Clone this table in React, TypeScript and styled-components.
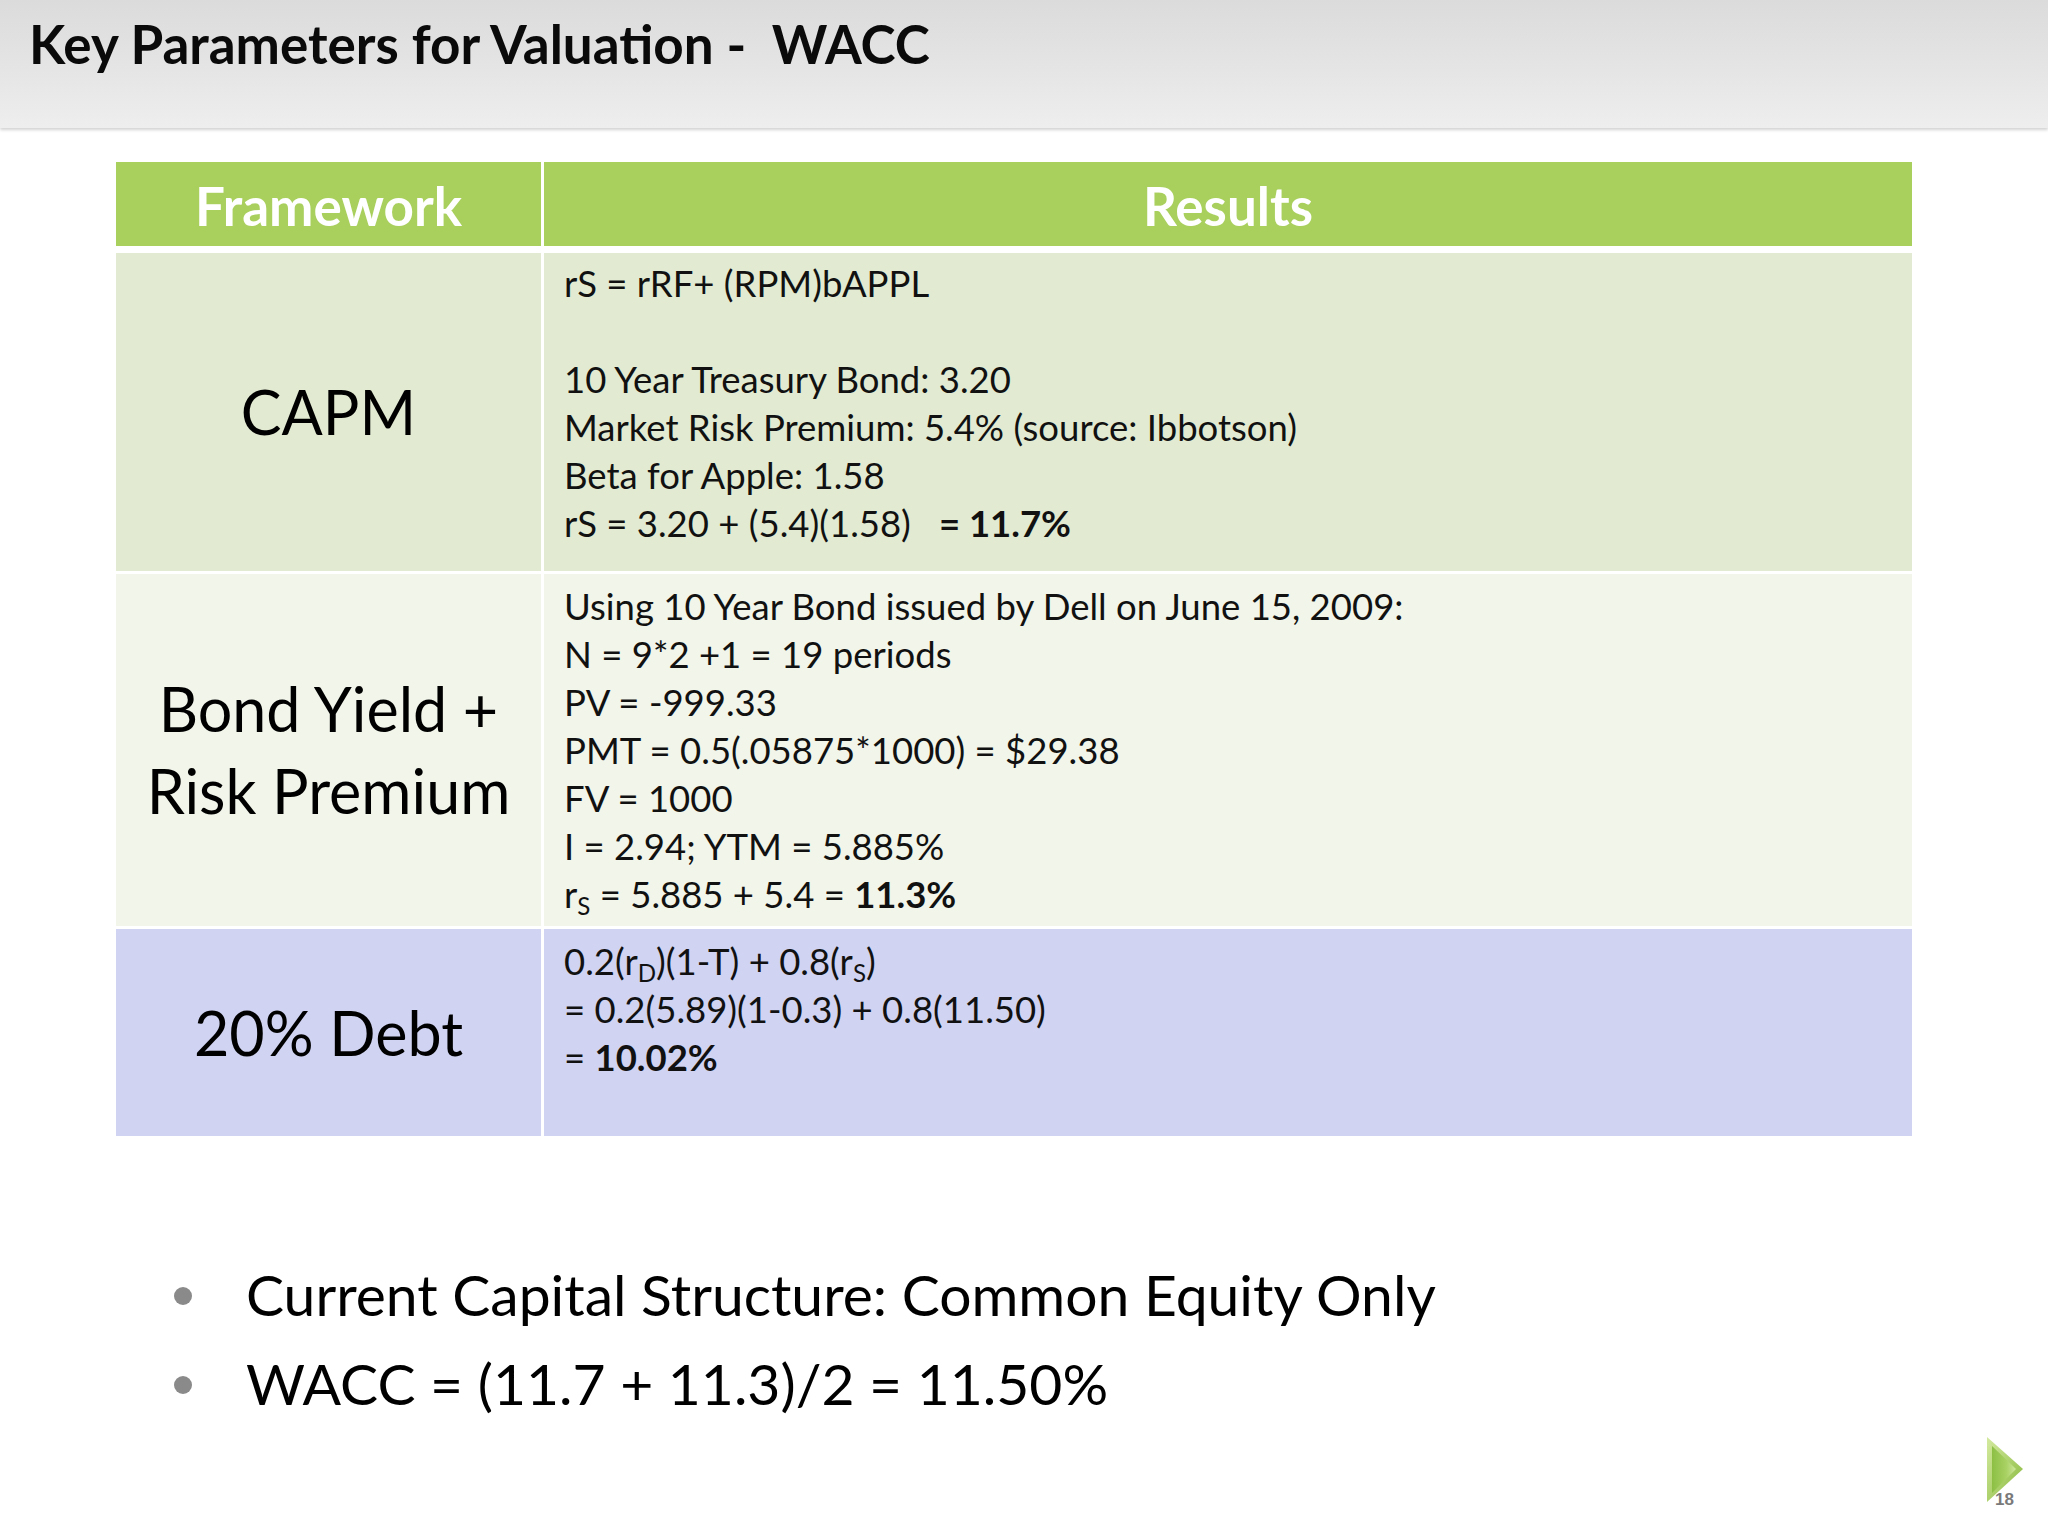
import React from 'react';
import styled, { createGlobalStyle } from 'styled-components';

const GlobalStyle = createGlobalStyle`
  html, body {
    margin: 0;
    padding: 0;
    background: #ffffff;
  }
  body {
    font-family: Lato, 'Open Sans', sans-serif;
    color: #000000;
  }
`;

const Slide = styled.div`
  position: relative;
  width: 2048px;
  height: 1536px;
  overflow: hidden;
  background: #ffffff;
`;

const TitleBar = styled.header`
  height: 128px;
  box-sizing: border-box;
  padding: 12px 0 0 29px;
  background: linear-gradient(180deg, #dbdbdb 0%, #e5e5e5 55%, #eeeeee 100%);
  box-shadow: 0 2px 3px rgba(0, 0, 0, 0.18);
`;

const Title = styled.h1`
  margin: 0;
  font-size: 53px;
  font-weight: 700;
  line-height: 1.2;
  color: #0a0a0a;
  white-space: pre;
`;

const Table = styled.div`
  margin: 34px 0 0 116px;
  width: 1796px;
  display: flex;
  flex-direction: column;
  gap: 3px;
`;

const Row = styled.div<{ $h: number; $bg: string; $after?: number }>`
  display: grid;
  grid-template-columns: 425px 1fr;
  column-gap: 3px;
  height: ${(p) => p.$h}px;
  margin-bottom: ${(p) => p.$after ?? 0}px;

  & > div {
    background: ${(p) => p.$bg};
  }
`;

const HeaderCell = styled.div`
  display: flex;
  align-items: center;
  justify-content: center;
  color: #ffffff;
  font-size: 53px;
  font-weight: 700;
  padding-top: 3px;
`;

const NameCell = styled.div`
  display: flex;
  align-items: center;
  justify-content: center;
  text-align: center;
  font-size: 61px;
  line-height: 82px;
  color: #000000;
`;

const ResultCell = styled.div<{ $pad: number }>`
  box-sizing: border-box;
  padding: ${(p) => p.$pad}px 20px 0 20px;
  font-size: 36.5px;
  line-height: 48px;
  color: #111111;
`;

const Line = styled.div`
  min-height: 48px;
  white-space: pre;
`;

const Strong = styled.b`
  font-weight: 700;
`;

const Sub = styled.span`
  font-size: 0.66em;
  line-height: 0;
  vertical-align: -0.28em;
`;

const Bullets = styled.ul`
  list-style: none;
  margin: 114px 0 0 0;
  padding: 0 0 0 174px;
`;

const BulletItem = styled.li`
  display: flex;
  align-items: flex-start;
  gap: 54px;
  font-size: 57px;
  line-height: 89px;
  color: #000000;
`;

const Dot = styled.span`
  flex: none;
  width: 18px;
  height: 18px;
  margin-top: 37px;
  border-radius: 50%;
  background: #8a8a8a;
`;

const PageBadge = styled.div`
  position: absolute;
  left: 1985px;
  top: 1435px;
  width: 44px;
  height: 80px;
`;

const PageNumber = styled.span`
  position: absolute;
  left: 10px;
  top: 55px;
  font-family: 'Liberation Sans', Arial, sans-serif;
  font-size: 17px;
  font-weight: 700;
  color: #7a7a7a;
`;

const NextArrow = () => (
  <svg width="40" height="70" viewBox="0 0 40 70">
    <defs>
      <linearGradient id="arrowOuter" x1="0" y1="0" x2="1" y2="1">
        <stop offset="0" stopColor="#d4eaa0" />
        <stop offset="1" stopColor="#86b83a" />
      </linearGradient>
      <linearGradient id="arrowInner" x1="0" y1="0" x2="1" y2="0">
        <stop offset="0" stopColor="#8cbf44" />
        <stop offset="0.6" stopColor="#a9d264" />
        <stop offset="1" stopColor="#cfe79c" />
      </linearGradient>
    </defs>
    <polygon points="2,2 38,34 2,67" fill="url(#arrowOuter)" />
    <polygon points="7,11 31,34 7,58" fill="url(#arrowInner)" />
  </svg>
);

export default function App() {
  return (
    <Slide>
      <GlobalStyle />
      <TitleBar>
        <Title>{'Key Parameters for Valuation -  WACC'}</Title>
      </TitleBar>

      <Table>
        <Row $h={84} $bg="#a9cf5d" $after={4}>
          <HeaderCell>Framework</HeaderCell>
          <HeaderCell>Results</HeaderCell>
        </Row>

        <Row $h={318} $bg="#e2ebd1">
          <NameCell>CAPM</NameCell>
          <ResultCell $pad={6}>
            <Line>rS = rRF+ (RPM)bAPPL</Line>
            <Line />
            <Line>10 Year Treasury Bond: 3.20</Line>
            <Line>Market Risk Premium: 5.4% (source: Ibbotson)</Line>
            <Line>Beta for Apple: 1.58</Line>
            <Line>
              {'rS = 3.20 + (5.4)(1.58)   '}
              <Strong>= 11.7%</Strong>
            </Line>
          </ResultCell>
        </Row>

        <Row $h={352} $bg="#f1f5ea">
          <NameCell>
            Bond Yield +
            <br />
            Risk Premium
          </NameCell>
          <ResultCell $pad={8}>
            <Line>Using 10 Year Bond issued by Dell on June 15, 2009:</Line>
            <Line>N = 9*2 +1 = 19 periods</Line>
            <Line>PV = -999.33</Line>
            <Line>PMT = 0.5(.05875*1000) = $29.38</Line>
            <Line>FV = 1000</Line>
            <Line>I = 2.94; YTM = 5.885%</Line>
            <Line>
              r<Sub>S</Sub>
              {' = 5.885 + 5.4 = '}
              <Strong>11.3%</Strong>
            </Line>
          </ResultCell>
        </Row>

        <Row $h={207} $bg="#d0d3f2">
          <NameCell>20% Debt</NameCell>
          <ResultCell $pad={8}>
            <Line>
              0.2(r<Sub>D</Sub>)(1-T) + 0.8(r<Sub>S</Sub>)
            </Line>
            <Line>= 0.2(5.89)(1-0.3) + 0.8(11.50)</Line>
            <Line>
              {'= '}
              <Strong>10.02%</Strong>
            </Line>
          </ResultCell>
        </Row>
      </Table>

      <Bullets>
        <BulletItem>
          <Dot />
          Current Capital Structure: Common Equity Only
        </BulletItem>
        <BulletItem>
          <Dot />
          WACC = (11.7 + 11.3)/2 = 11.50%
        </BulletItem>
      </Bullets>

      <PageBadge>
        <NextArrow />
        <PageNumber>18</PageNumber>
      </PageBadge>
    </Slide>
  );
}
